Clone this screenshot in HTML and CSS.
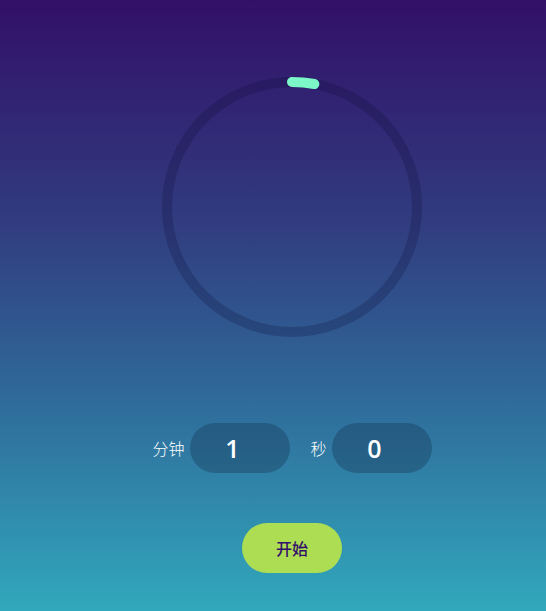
FILE: index.html
```html
<!DOCTYPE html>
<html lang="zh">
<head>
<meta charset="utf-8">
<link rel="stylesheet" href="styles.css">
</head>
<body>
<main class="app">
  <div class="ring">
    <svg width="260" height="260" viewBox="0 0 260 260">
      <circle class="track" cx="130" cy="130" r="125"></circle>
      <circle class="progress" cx="130" cy="130" r="125" transform="rotate(-90 130 130)" stroke-dasharray="22.5 1000"></circle>
    </svg>
  </div>
  <div class="inputs">
    <label class="field"><span class="lbl">分钟</span><span class="pill">1</span></label>
    <label class="field"><span class="lbl">秒</span><span class="pill">0</span></label>
  </div>
  <button class="start">开始</button>
</main>
</body>
</html>
```
FILE: styles.css
```css
html, body {
  margin: 0;
  height: 100%;
}
body {
  background: linear-gradient(to bottom, #321068 0%, #313a7e 35%, #2f6a9a 65%, #31a8bc 100%);
  font-family: "Noto Sans CJK SC", "Noto Sans", sans-serif;
  color: #fff;
  overflow: hidden;
}
.app {
  display: flex;
  flex-direction: column;
  align-items: center;
  padding-top: 77px;
  padding-left: 38px;
}
.ring {
  width: 260px;
  height: 260px;
}
.ring svg { display: block; }
.track {
  fill: none;
  stroke: rgba(10, 10, 50, 0.22);
  stroke-width: 10;
}
.progress {
  fill: none;
  stroke: #7cf8c8;
  stroke-width: 10;
  stroke-linecap: round;
}
.inputs {
  display: flex;
  gap: 21px;
  margin-top: 86px;
}
.field {
  display: flex;
  align-items: center;
  gap: 5px;
}
.lbl {
  font-size: 16px;
  font-weight: 300;
}
.pill {
  box-sizing: border-box;
  width: 100px;
  height: 50px;
  padding-right: 14px;
  border-radius: 25px;
  background: rgba(20, 50, 80, 0.35);
  display: flex;
  align-items: center;
  justify-content: center;
  font-family: "Open Sans", sans-serif;
  font-weight: 600;
  font-size: 25px;
}
.start {
  margin-top: 50px;
  width: 100px;
  height: 50px;
  border: none;
  border-radius: 25px;
  background: #addd52;
  color: #33106a;
  font-family: "Noto Sans CJK SC", sans-serif;
  font-weight: 500;
  font-size: 16px;
}
```
